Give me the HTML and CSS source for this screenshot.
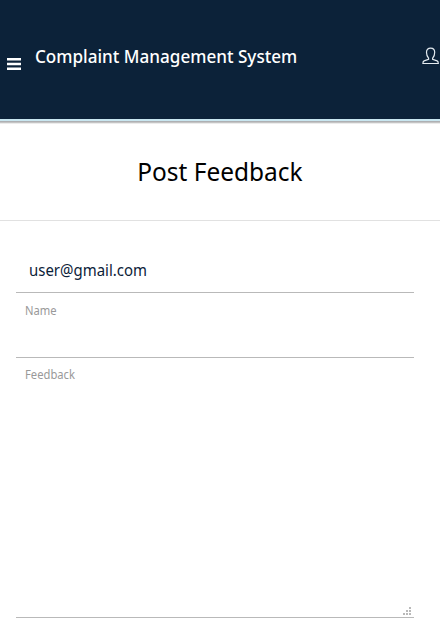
FILE: index.html
```html
<!DOCTYPE html>
<html lang="en">
<head>
<meta charset="utf-8">
<title>Post Feedback</title>
<link rel="stylesheet" href="styles.css">
</head>
<body>
<header class="topbar">
  <svg class="menu" viewBox="0 0 14 12"><path d="M0 0h14v2.4H0zM0 4.8h14v2.4H0zM0 9.6h14V12H0z"/></svg>
  <span class="brand">Complaint Management System</span>
  <svg class="user" viewBox="0 0 18 18"><path d="M6.6 11.2C5 9.7 4.5 7.8 4.5 5.3 4.5 2.7 6 1.2 8.6 1.2s4.1 1.5 4.1 4.1c0 2.5-.5 4.4-2.1 5.9v1.1l4.5 1.6c1 .4 1.2 1.2 1.2 2.6H.9c0-1.4.2-2.2 1.2-2.6l4.5-1.6z"/></svg>
</header>
<main>
  <h1 class="heading"><span>Post Feedback</span></h1>
  <form class="form">
    <div class="field email"><span>user@gmail.com</span></div>
    <div class="field name"><span>Name</span></div>
    <div class="field feedback"><span>Feedback</span>
      <svg class="grip" viewBox="0 0 8 8"><path d="M6 0h2v2H6zM3 3h2v2H3zM6 3h2v2H6zM0 6h2v2H0zM3 6h2v2H3zM6 6h2v2H6z"/></svg>
    </div>
  </form>
</main>
</body>
</html>
```
FILE: styles.css
```css
* { box-sizing: border-box; }
body {
  margin: 0;
  height: 622px;
  overflow: hidden;
  background: #fff;
  font-family: "Noto Sans", "Open Sans", sans-serif;
}
.topbar {
  display: flex;
  align-items: flex-start;
  height: 121px;
  padding-left: 7px;
  background: #0c2239;
  border-bottom: 2px solid #c9e6f0;
  box-shadow: 0 1px 0 #aeb0b3, 0 2px 0 #c4c4c4, 0 3px 0 #ececec;
}
.menu { width: 14px; height: 12px; margin-top: 58px; fill: #fff; }
.brand {
  margin: 44px 0 0 14px;
  font-size: 18px;
  line-height: 25px;
  font-weight: 500;
  white-space: nowrap;
  color: #fff;
  transform: scaleX(.95);
  transform-origin: left;
}
.user {
  width: 18px;
  height: 18px;
  margin: 47px 0 0 auto;
  fill: none;
  stroke: #e4ebf0;
  stroke-width: 1.2;
}
.heading {
  display: flex;
  justify-content: center;
  height: 100px;
  margin: 0;
  padding-top: 32px;
  border-bottom: 1px solid #e1e1e1;
  font-size: 26px;
  line-height: 36px;
  font-weight: 370;
  color: #000;
}
.heading span { transform: scaleX(.94); }
.form { padding: 0 26px 0 16px; }
.field { display: flex; align-items: flex-start; border-bottom: 1px solid #b9b9b9; }
.field span { transform: scaleX(.935); transform-origin: left; }
.email {
  height: 72px;
  padding: 38px 0 0 13px;
  font-size: 16px;
  line-height: 22px;
  color: #0c2239;
}
.name, .feedback {
  padding: 9px 3px 0 9px;
  font-size: 12px;
  line-height: 18px;
  color: #999;
}
.name { height: 65px; }
.feedback { height: 260px; padding-top: 8px; padding-bottom: 2px; justify-content: space-between; }
.grip { width: 8px; height: 8px; align-self: flex-end; fill: #b9b9b9; }
```
